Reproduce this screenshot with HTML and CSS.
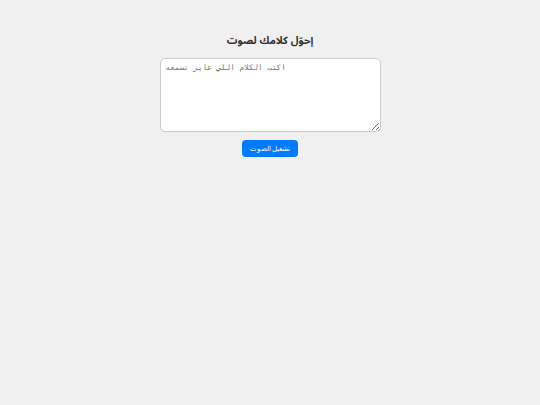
FILE: index.html
```html
<!DOCTYPE html>
<html lang="ar">

<head>
    <meta charset="UTF-8">
    <meta name="viewport" content="width=device-width, initial-scale=1.0">
    <title>إحوّل كلامك لصوت</title>
    <link rel="stylesheet" href="styles.css">
</head>

<body>
    <div class="container">
        <h2>إحوّل كلامك لصوت</h2>
        <textarea id="text" placeholder="اكتب الكلام اللي عايز تسمعه"></textarea>
        <br>
        <button id="speak">تشغيل الصوت</button>
    </div>
</body>

</html>
```

FILE: styles.css
```css
body {
    font-family: Arial, "Liberation Sans", "Noto Sans Arabic", "DejaVu Sans", sans-serif;
    background-color: #f0f0f0;
    margin: 0;
    padding: 20px;
    text-align: center;
}

.container {
    margin: auto;
}

h2 {
    color: #333;
    font-size: 10.5px;
    line-height: 14px;
    margin: 13px 0 11px;
}

textarea {
    width: 221px;
    height: 74px;
    padding: 4px 5px;
    box-sizing: border-box;
    border: 1px solid #ccc;
    border-radius: 5px;
    background: #fff;
    font-family: monospace;
    font-size: 7.7px;
    display: inline-block;
    vertical-align: top;
}

button {
    margin-top: 8px;
    width: 56px;
    height: 17px;
    padding: 0;
    background-color: #007BFF;
    color: #fff;
    border: none;
    border-radius: 4px;
    font-size: 6.5px;
    cursor: pointer;
}

button:hover {
    background-color: #0056b3;
}
```
